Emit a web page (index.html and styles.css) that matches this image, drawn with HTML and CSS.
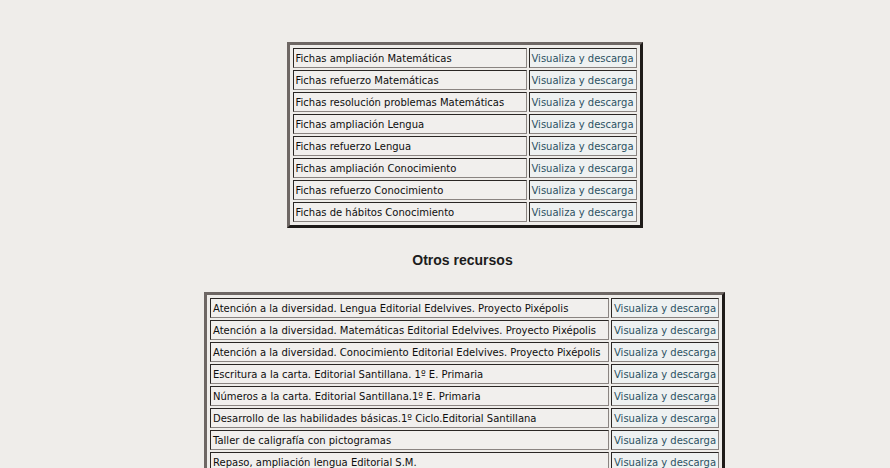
FILE: index.html
```html
<!DOCTYPE html>
<html lang="es">
<head>
<meta charset="utf-8">
<link rel="stylesheet" href="styles.css">
</head>
<body>
<div class="page">
  <table class="res res-1">
    <tr><td class="name">Fichas ampliación Matemáticas</td><td class="link"><a href="#">Visualiza y descarga</a></td></tr>
    <tr><td class="name">Fichas refuerzo Matemáticas</td><td class="link"><a href="#">Visualiza y descarga</a></td></tr>
    <tr><td class="name">Fichas resolución problemas Matemáticas</td><td class="link"><a href="#">Visualiza y descarga</a></td></tr>
    <tr><td class="name">Fichas ampliación Lengua</td><td class="link"><a href="#">Visualiza y descarga</a></td></tr>
    <tr><td class="name">Fichas refuerzo Lengua</td><td class="link"><a href="#">Visualiza y descarga</a></td></tr>
    <tr><td class="name">Fichas ampliación Conocimiento</td><td class="link"><a href="#">Visualiza y descarga</a></td></tr>
    <tr><td class="name">Fichas refuerzo Conocimiento</td><td class="link"><a href="#">Visualiza y descarga</a></td></tr>
    <tr><td class="name">Fichas de hábitos Conocimiento</td><td class="link"><a href="#">Visualiza y descarga</a></td></tr>
  </table>

  <h2 class="title">Otros recursos</h2>

  <table class="res res-2">
    <tr><td class="name">Atención a la diversidad. Lengua Editorial Edelvives. Proyecto Pixépolis</td><td class="link"><a href="#">Visualiza y descarga</a></td></tr>
    <tr><td class="name">Atención a la diversidad. Matemáticas Editorial Edelvives. Proyecto Pixépolis</td><td class="link"><a href="#">Visualiza y descarga</a></td></tr>
    <tr><td class="name">Atención a la diversidad. Conocimiento Editorial Edelvives. Proyecto Pixépolis</td><td class="link"><a href="#">Visualiza y descarga</a></td></tr>
    <tr><td class="name">Escritura a la carta. Editorial Santillana. 1º E. Primaria</td><td class="link"><a href="#">Visualiza y descarga</a></td></tr>
    <tr><td class="name">Números a la carta. Editorial Santillana.1º E. Primaria</td><td class="link"><a href="#">Visualiza y descarga</a></td></tr>
    <tr><td class="name">Desarrollo de las habilidades básicas.1º Ciclo.Editorial Santillana</td><td class="link"><a href="#">Visualiza y descarga</a></td></tr>
    <tr><td class="name">Taller de caligrafía con pictogramas</td><td class="link"><a href="#">Visualiza y descarga</a></td></tr>
    <tr><td class="name">Repaso, ampliación lengua Editorial S.M.</td><td class="link"><a href="#">Visualiza y descarga</a></td></tr>
  </table>
</div>
</body>
</html>
```

FILE: styles.css
```css
html, body {
  margin: 0;
  padding: 0;
  background: #efedea;
}

.page {
  padding: 42px 0 0 39px;
  display: flex;
  flex-direction: column;
  align-items: center;
  font-family: "DejaVu Sans", Verdana, sans-serif;
}

.res {
  border-collapse: separate;
  border-spacing: 2px;
  padding: 1px;
  border-style: solid;
  border-width: 3px;
  border-color: #6e6764 #1e1b19 #1e1b19 #6e6764;
  background: #efedea;
}

.res td {
  height: 17px;
  padding: 1px 1px 0 2px;
  border-style: solid;
  border-width: 1px;
  border-color: #2a2624 #8a8481 #8a8481 #2a2624;
  font-size: 10px;
  line-height: 17px;
  white-space: nowrap;
  color: #0e0e0e;
}

.res td.name {
  background: #f1efed;
}

.res td.link {
  background: #eef1f1;
  width: 103px;
}

.res-1 td.name {
  width: 229px;
}

.res-2 td.name {
  width: 394px;
}

.res a {
  color: #2c5163;
  text-decoration: none;
}

.title {
  margin: 23px 0 23px -4px;
  font-family: "Liberation Sans", Arial, sans-serif;
  font-size: 14px;
  font-weight: bold;
  line-height: 18px;
  color: #1c1c1c;
}
```
